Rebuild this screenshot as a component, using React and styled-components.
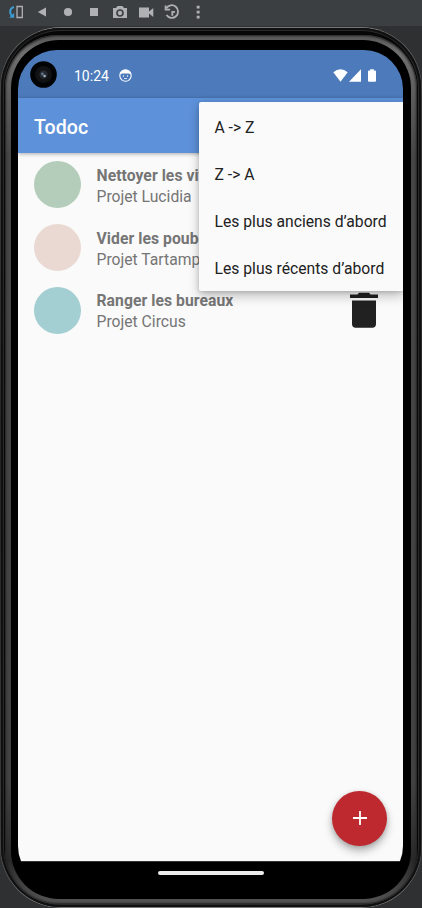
import React from "react";
import styled, { createGlobalStyle } from "styled-components";

const GlobalStyle = createGlobalStyle`
  * { box-sizing: border-box; }
  html, body { margin: 0; overflow: hidden; background: #2f3032; }
  body { font-family: Roboto, "Liberation Sans", sans-serif; }
`;

const Emulator = styled.div`
  display: flex;
  flex-direction: column;
  width: 422px;
  height: 908px;
  background: #2f3032;
`;

const Toolbar = styled.header`
  flex: none;
  display: flex;
  gap: 8px;
  height: 26px;
  padding: 3px 0 0 7px;
  background: #3c3f41;
  color: #afb1b3;
`;

const ToolIcon = styled.svg`
  display: block;
  width: 18px;
  height: 18px;
  fill: currentColor;
`;

const Rim = styled.div`
  flex: none;
  height: 881px;
  margin-top: 1px;
  padding: 1px;
  border-radius: 61px;
  background: linear-gradient(#777, #3b3b3b 8%, #242424 50%, #3b3b3b 92%, #777);
`;

const Shell = styled.div`
  height: 100%;
  padding: 7px 4px 3px;
  border-radius: 60px;
  background: #070707;
  box-shadow: inset 0 0 0 2px #101010, inset 0 0 0 3px #292929;
`;

const Metal = styled.div`
  height: 100%;
  padding: 5px 6px;
  border-radius: 53px;
  background: linear-gradient(#555, #707070 2%, #5c5c5c 7%, #464646 14%, #424242 86%, #292929 95%, #555);
  box-shadow: inset 0 0 2px 1px #222;
`;

const Bezel = styled.div`
  height: 100%;
  padding: 10px 8px 0 7px;
  border-radius: 48px;
  background: #000;
`;

const Screen = styled.main`
  position: relative;
  display: flex;
  flex-direction: column;
  height: 835px;
  overflow: hidden;
  border-radius: 39px;
  background: #000;
`;

const StatusBar = styled.div`
  flex: none;
  display: flex;
  align-items: center;
  height: 48px;
  padding: 2px 27px 0 12px;
  background: #4c7aba;
  color: #fff;
`;

const Camera = styled.svg`
  width: 27px;
  height: 27px;
  margin-top: -2px;
`;

const Clock = styled.time`
  width: 35px;
  margin: 1px 10px 0 17px;
  font-size: 14px;
  line-height: 18px;
  white-space: nowrap;
`;

const StatusIcon = styled.svg`
  width: ${({ $w }) => $w}px;
  height: 13px;
  margin-left: ${({ $gap = 0 }) => $gap};
  fill: #fff;
`;

const AppBar = styled.div`
  flex: none;
  position: relative;
  display: flex;
  align-items: center;
  height: 55px;
  padding: 5px 16px 0;
  background: #5d91d9;
  box-shadow: 0 1px 4px rgba(0, 0, 0, 0.32);
`;

const Title = styled.h1`
  margin: 0;
  color: #fff;
  font-size: 19.6px;
  font-weight: 500;
  line-height: 26px;
`;

const Content = styled.section`
  flex: none;
  height: 708px;
  padding-top: 0.5px;
  background: #fafafa;
`;

const TaskRow = styled.article`
  display: flex;
  align-items: center;
  height: 62.7px;
  padding: 0 23px 0 16px;
`;

const ProjectDot = styled.span`
  flex: none;
  width: 47px;
  height: 47px;
  border-radius: 50%;
  background: ${({ $color }) => $color};
`;

const TaskText = styled.div`
  flex: 1;
  margin-left: 15.5px;
  padding-top: 2px;
  color: #757575;
  font-size: 15.7px;
  line-height: 21px;
  white-space: nowrap;
`;

const TaskName = styled.div`
  font-weight: 700;
  letter-spacing: 0.06px;
`;

const TrashIcon = styled.svg`
  width: 32px;
  height: 36px;
  fill: #212121;
`;

const Menu = styled.nav`
  position: absolute;
  top: 52px;
  right: 0;
  width: 204px;
  height: 189px;
  padding-top: 1px;
  border-radius: 2px 0 0 2px;
  background: #fafafa;
  box-shadow: 0 5px 12px rgba(0, 0, 0, 0.24), 0 1px 4px rgba(0, 0, 0, 0.16);
`;

const MenuItem = styled.div`
  display: flex;
  align-items: center;
  height: 47px;
  padding: 1px 15.5px 0;
  color: #212121;
  font-size: 15.7px;
  white-space: nowrap;
`;

const AddButton = styled.button`
  position: absolute;
  right: 16px;
  bottom: 39px;
  display: grid;
  place-items: center;
  width: 55px;
  height: 55px;
  padding: 0;
  border: 0;
  border-radius: 50%;
  background: #bd292e;
  box-shadow: 0 5px 9px rgba(0, 0, 0, 0.28), 0 1px 4px rgba(0, 0, 0, 0.15);
`;

const AddIcon = styled.svg`
  width: 16px;
  height: 16px;
  margin-top: -1px;
`;

const NavArea = styled.footer`
  flex: none;
  display: flex;
  justify-content: center;
  height: 24px;
  padding-top: 9px;
  border-top: 1px solid #333;
`;

const HomeHandle = styled.span`
  width: 106px;
  height: 4px;
  border-radius: 2px;
  background: #ececec;
`;

const tasks = [
  { name: "Nettoyer les vitres", project: "Projet Lucidia", color: "#b4cdba" },
  { name: "Vider les poubelles", project: "Projet Tartampion", color: "#ead9d2" },
  { name: "Ranger les bureaux", project: "Projet Circus", color: "#a3ced2" },
];

const sortOptions = ["A -> Z", "Z -> A", "Les plus anciens d’abord", "Les plus récents d’abord"];

const tools = [
  <g key="rotate">
    <path d="M10 3.500h5.300v11H10z" fill="none" stroke="currentColor" strokeWidth="1.300" />
    <path d="M7 4C2.500 5 2 10.500 5.500 13.500" fill="none" stroke="#3d9bd3" strokeWidth="2" />
    <path d="M2.200 14.700h5V9.700z" fill="#3d9bd3" />
  </g>,
  <path key="back" d="M4.8 9 13 4.5v9z" />,
  <circle key="home" cx="9" cy="9" r="4.1" />,
  <path key="recent" d="M5 5h8v8H5z" />,
  <path key="camera" fillRule="evenodd" d="M2 5h3l1.5-2h5L13 5h3v10H2zm7 1.2a3.8 3.8 0 1 0 0 7.6 3.8 3.8 0 0 0 0-7.6zm0 1.6a2.2 2.2 0 1 1 0 4.4 2.2 2.2 0 0 1 0-4.4z" />,
  <path key="video" d="M2 4.5h10v4L16.3 5v9L12 10.5v4H2z" />,
  <g key="history" fill="none" stroke="currentColor" strokeWidth="1.8">
    <path d="M3.4 5.2A6.3 6.3 0 1 1 3.5 12" />
    <path d="M2.6 2.5v4.2h4.5M12 8.8H9.3v4" />
  </g>,
  <path key="more" d="M7.700 2.700h2.900v2.900H7.700zm0 5h2.900v2.900H7.700zm0 5h2.900v2.900H7.700z" />,
];

export default function App() {
  return (
    <>
      <GlobalStyle />
      <Emulator>
        <Toolbar>
          {tools.map((drawing) => (
            <ToolIcon key={drawing.key} viewBox="0 0 18 18">{drawing}</ToolIcon>
          ))}
        </Toolbar>
        <Rim>
          <Shell>
            <Metal>
              <Bezel>
                <Screen>
                  <StatusBar>
                    <Camera viewBox="0 0 27 27">
                      <circle cx="13.5" cy="13.5" r="13.3" fill="#020304" />
                      <circle cx="13.5" cy="13.5" r="8.5" fill="#111214" />
                      <circle cx="13.5" cy="13.5" r="4.2" fill="#252a30" />
                      <circle cx="12.4" cy="13" r="1.4" fill="#61728a" />
                      <circle cx="14.6" cy="15" r="1.2" fill="#a7b5c9" />
                    </Camera>
                    <Clock>10:24</Clock>
                    <StatusIcon $w={13} viewBox="0 0 13 13">
                      <circle cx="6.5" cy="6.5" r="5.7" fill="none" stroke="#fff" strokeWidth="1.1" />
                      <path d="M1 5.4C2 2 4 .8 6.5.8S11 2 12 5.4L9.8 4.5H3.2z" />
                      <circle cx="4.5" cy="7" r=".7" />
                      <circle cx="8.5" cy="7" r=".7" />
                      <path d="M5 9.2h3v.8H5z" />
                    </StatusIcon>
                    <StatusIcon $w={15} $gap="auto" viewBox="0 0 15 13">
                      <path d="M.3 3.2Q7.5-2.5 14.7 3.2L7.5 12.8z" />
                    </StatusIcon>
                    <StatusIcon $w={12} $gap="1px" viewBox="0 0 12 13">
                      <path d="M12 .3v12.4H0z" />
                    </StatusIcon>
                    <StatusIcon $w={8} $gap="7px" viewBox="0 0 8 13">
                      <path d="M2.2.3h3.6v1.2H7q1 0 1 1v9.2q0 1-1 1H1q-1 0-1-1V2.5q0-1 1-1h1.2z" />
                    </StatusIcon>
                  </StatusBar>
                  <AppBar><Title>Todoc</Title></AppBar>
                  <Content>
                    {tasks.map((task) => (
                      <TaskRow key={task.name}>
                        <ProjectDot $color={task.color} />
                        <TaskText>
                          <TaskName>{task.name}</TaskName>
                          <div>{task.project}</div>
                        </TaskText>
                        <TrashIcon viewBox="0 0 32 36">
                          <path d="M2 2.5h7.5L11 .7h10l1.500 1.800H30V6H2zM4 8.500h24v23.500q0 3.700-3.700 3.700H7.700Q4 35.700 4 32z" />
                        </TrashIcon>
                      </TaskRow>
                    ))}
                  </Content>
                  <NavArea><HomeHandle /></NavArea>
                  <Menu>
                    {sortOptions.map((option) => <MenuItem key={option}>{option}</MenuItem>)}
                  </Menu>
                  <AddButton aria-label="Ajouter">
                    <AddIcon viewBox="0 0 16 16">
                      <path d="M1 8h14M8 1v14" stroke="#fff" strokeWidth="1.8" />
                    </AddIcon>
                  </AddButton>
                </Screen>
              </Bezel>
            </Metal>
          </Shell>
        </Rim>
      </Emulator>
    </>
  );
}
